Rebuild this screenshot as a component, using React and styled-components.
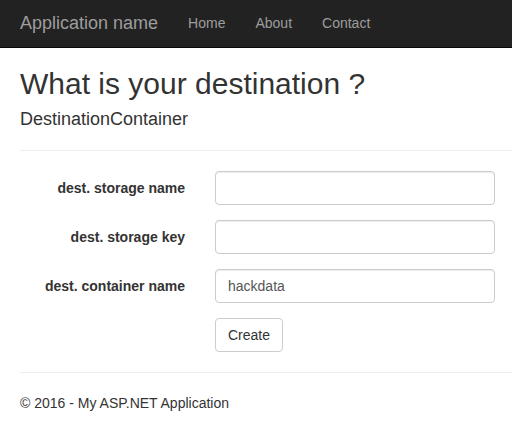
import React from 'react'
import styled, { createGlobalStyle } from 'styled-components'

const GlobalStyle = createGlobalStyle`
  html, body {
    margin: 0;
    padding: 0;
    background: #fff;
  }
  body {
    font-family: "Liberation Sans", Arial, sans-serif;
    font-size: 14px;
    line-height: 20px;
    color: #333;
  }
  * {
    box-sizing: border-box;
  }
`

const Navbar = styled.nav`
  display: flex;
  align-items: flex-start;
  height: 48px;
  padding-left: 5px;
  background-color: #222;
  border-bottom: 1px solid #080808;
`

const Brand = styled.a`
  padding: 13px 15px;
  font-size: 18px;
  line-height: 20px;
  color: #9d9d9d;
  text-decoration: none;
`

const NavLink = styled.a`
  padding: 13px 15px;
  font-size: 14px;
  line-height: 20px;
  color: #9d9d9d;
  text-decoration: none;
`

const Body = styled.div`
  padding-left: 20px;
`

const Title = styled.h2`
  margin: 19px 0 10px;
  font-size: 30px;
  font-weight: 500;
  line-height: 1.1;
`

const Subtitle = styled.h4`
  margin: 10px 0 20px;
  font-size: 18px;
  font-weight: 500;
  line-height: 1.1;
`

const Rule = styled.hr`
  margin: 20px 0;
  border: 0;
  border-top: 1px solid #eee;
`

const Form = styled.div`
  display: grid;
  grid-template-columns: 165px 280px;
  column-gap: 30px;
  row-gap: 15px;
`

const Label = styled.label`
  padding-top: 7px;
  text-align: right;
  font-weight: bold;
`

const Input = styled.input`
  display: block;
  width: 280px;
  height: 34px;
  padding: 6px 12px;
  font-family: inherit;
  font-size: 14px;
  line-height: 20px;
  color: #555;
  background: #fff;
  border: 1px solid #ccc;
  border-radius: 4px;
  box-shadow: inset 0 1px 1px rgba(0, 0, 0, 0.075);
  outline: none;
`

const Button = styled.button`
  grid-column: 2;
  justify-self: start;
  height: 34px;
  padding: 6px 12px;
  font-family: inherit;
  font-size: 14px;
  line-height: 20px;
  color: #333;
  background: #fff;
  border: 1px solid #ccc;
  border-radius: 4px;
`

const Footer = styled.footer`
  p {
    margin: 0 0 10px;
  }
`

const fields = [
  { label: 'dest. storage name', value: '' },
  { label: 'dest. storage key', value: '' },
  { label: 'dest. container name', value: 'hackdata' },
]

export default function App() {
  return (
    <>
      <GlobalStyle />
      <Navbar>
        <Brand href="#">Application name</Brand>
        <NavLink href="#">Home</NavLink>
        <NavLink href="#">About</NavLink>
        <NavLink href="#">Contact</NavLink>
      </Navbar>
      <Body>
        <Title>What is your destination ?</Title>
        <Subtitle>DestinationContainer</Subtitle>
        <Rule />
        <Form>
          {fields.map(f => (
            <React.Fragment key={f.label}>
              <Label>{f.label}</Label>
              <Input defaultValue={f.value} />
            </React.Fragment>
          ))}
          <Button>Create</Button>
        </Form>
        <Rule />
        <Footer>
          <p>&copy; 2016 - My ASP.NET Application</p>
        </Footer>
      </Body>
    </>
  )
}
